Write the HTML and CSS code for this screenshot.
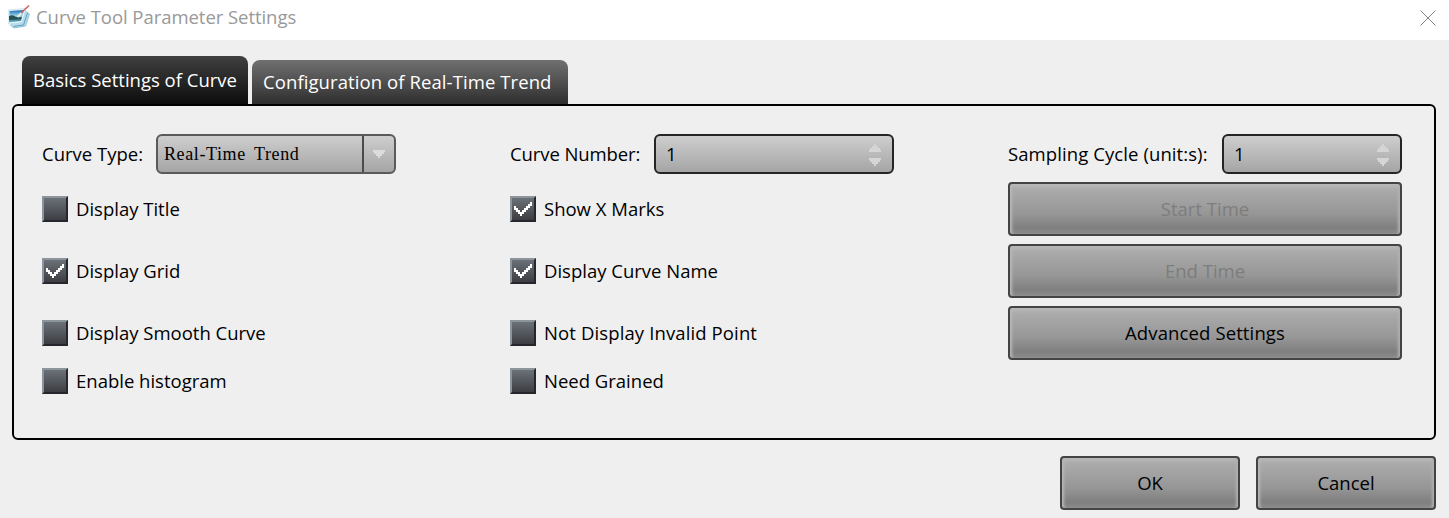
FILE: index.html
```
<!DOCTYPE html>
<html lang="en">
<head>
<meta charset="utf-8">
<title>Curve Tool Parameter Settings</title>
<link rel="stylesheet" href="styles.css">
</head>
<body>
<svg class="defs" width="0" height="0" aria-hidden="true">
  <symbol id="check" viewBox="0 0 26 26"><path d="M4 10h2v2h2v2h2v2h2v-2h2v-2h2v-2h2v-2h2v-2h2v4h-2v2h-2v2h-2v2h-2v2h-2v2h-2v-2h-2v-2h-2v-2h-2z" fill="#fff"/></symbol>
  <symbol id="down" viewBox="0 0 12 8"><path d="M0 0h12v2h-1v2h-2v2h-2v2h-2v-2h-2v-2h-2v-2h-1z" fill="#dcdcdc"/></symbol>
  <symbol id="spin" viewBox="0 0 12 22"><path d="M5 0h2v2h2v2h2v2h1v2h-12v-2h1v-2h2v-2h2zM0 14h12v2h-1v2h-2v2h-2v2h-2v-2h-2v-2h-2v-2h-1z" fill="#d5d5d5"/></symbol>
</svg>
<header class="titlebar">
  <svg class="app-icon" width="24" height="25" viewBox="0 0 24 25">
    <defs><linearGradient id="sky" x1="0" y1="0" x2="0" y2="1"><stop offset="0" stop-color="#1769b5"/><stop offset=".5" stop-color="#a6ddec"/><stop offset=".62" stop-color="#23556c"/><stop offset="1" stop-color="#71bdd5"/></linearGradient></defs>
    <path d="M17 7l4.500 3-4 12-12 2-3-3z" fill="#b4dcea" stroke="#8fc4da"/>
    <path d="M19.500 9l-4 12-10 1.500" fill="none" stroke="#5c9fc0"/>
    <path d="M0 6l18-1.500-4 14-14 1.500z" fill="#eef8fc" stroke="#b5d7e4" stroke-width=".6"/>
    <path d="M1.500 7l14.500-1-3 11-12 1.500z" fill="url(#sky)"/>
    <path d="M1 12q4-2 7 1l5 1v1l-12 1z" fill="#28524d"/>
    <path d="M9.500 13l4.500-4.500" stroke="#ededdf" stroke-width="2.200"/><path d="M13 9l8-7.500" stroke="#cc6761" stroke-width="1.600"/>
  </svg>
  <span class="window-title">Curve Tool Parameter Settings</span>
  <svg class="close" width="16" height="16" viewBox="0 0 16 16"><path d="M.5.5l15 15M15.500 .5l-15 15" stroke="#858585" fill="none"/></svg>
</header>
<nav class="tabs">
  <div class="tab active">Basics Settings of Curve</div>
  <div class="tab">Configuration of Real-Time Trend</div>
</nav>
<main class="panel">
  <div class="col">
    <div class="field"><span class="label">Curve Type:</span>
      <div class="combo"><span class="combo-value">Real-Time Trend</span><span class="combo-arrow"><svg width="12" height="8"><use href="#down"/></svg></span></div></div>
    <div class="option"><i class="box"></i><span>Display Title</span></div>
    <div class="option"><i class="box"><svg width="26" height="26"><use href="#check"/></svg></i><span>Display Grid</span></div>
    <div class="option"><i class="box"></i><span>Display Smooth Curve</span></div>
    <div class="option"><i class="box"></i><span>Enable histogram</span></div>
  </div>
  <div class="col">
    <div class="field"><span class="label">Curve Number:</span>
      <div class="spinbox"><span>1</span><svg width="12" height="22"><use href="#spin"/></svg></div></div>
    <div class="option"><i class="box"><svg width="26" height="26"><use href="#check"/></svg></i><span>Show X Marks</span></div>
    <div class="option"><i class="box"><svg width="26" height="26"><use href="#check"/></svg></i><span>Display Curve Name</span></div>
    <div class="option"><i class="box"></i><span class="wide">Not Display Invalid Point</span></div>
    <div class="option"><i class="box"></i><span>Need Grained</span></div>
  </div>
  <div class="col">
    <div class="field"><span class="label">Sampling Cycle (unit:s):</span>
      <div class="spinbox short"><span>1</span><svg width="12" height="22"><use href="#spin"/></svg></div></div>
    <button class="btn disabled">Start Time</button>
    <button class="btn disabled">End Time</button>
    <button class="btn wide">Advanced Settings</button>
  </div>
</main>
<footer class="actions"><button class="btn">OK</button><button class="btn">Cancel</button></footer>
</body>
</html>
```

FILE: styles.css
```
* { box-sizing: border-box; }
body {
  margin: 0;
  width: 1449px;
  height: 518px;
  overflow: hidden;
  background: #efefef;
  color: #000;
  font: 18.500px/26px "Open Sans", "Noto Sans", sans-serif;
  white-space: nowrap;
}
svg { display: block; flex: none; }
.defs { position: absolute; }
.titlebar {
  display: flex;
  align-items: flex-start;
  height: 40px;
  padding: 4px 13px 0 8px;
  background: #fff;
  color: #999;
}
.window-title { margin-left: 4px; letter-spacing: -0.05px; }
.close { margin: 6px 0 0 auto; }
.tabs {
  display: flex;
  align-items: flex-end;
  gap: 4px;
  height: 64px;
  padding-left: 22px;
}
.tab {
  width: 316px;
  height: 44px;
  padding: 9px 0 0 11px;
  border-radius: 8px 8px 0 0;
  background: linear-gradient(#707070, #2e2e2e);
  color: #fff;
  letter-spacing: 0.09px;
}
.tab.active {
  width: 226px;
  height: 48px;
  padding-top: 11px;
  background: linear-gradient(#404040, #0d0d0d);
  letter-spacing: 0;
}
.panel {
  display: grid;
  grid-template-columns: 468px 498px 394px;
  width: 1424px;
  height: 336px;
  margin-left: 12px;
  padding: 28px;
  border: 2px solid #000;
  border-radius: 6px;
}
.col {
  display: grid;
  grid-template-rows: 40px 54px 54px 54px 26px;
  gap: 8px;
  align-content: start;
}
.field { display: flex; align-items: center; }
.col:nth-child(1) .label { width: 114px; }
.col:nth-child(2) .label { width: 144px; letter-spacing: -0.1px; }
.col:nth-child(3) .label { width: 214px; letter-spacing: 0.09px; }
.combo, .spinbox {
  display: flex;
  align-items: center;
  width: 240px;
  height: 40px;
  border: 2px solid #5a5a5a;
  border-radius: 6px;
  background: linear-gradient(#cecece, #a5a5a5);
}
.combo-value {
  flex: 1;
  padding-left: 6px;
  font: 18px/26px "Liberation Serif", serif;
  letter-spacing: 0.6px;
  word-spacing: 3.5px;
}
.combo-arrow {
  display: flex;
  align-items: center;
  justify-content: center;
  width: 32px;
  height: 36px;
  border-left: 2px solid #484c50;
}
.spinbox {
  justify-content: space-between;
  padding: 0 11px 0 10px;
  border-color: #252525;
}
.spinbox svg { margin-top: 2px; }
.spinbox.short { width: 180px; }
.option { display: flex; align-items: center; gap: 8px; }
.wide { letter-spacing: 0.12px; }
.box {
  width: 26px;
  height: 26px;
  border: 2px solid;
  border-color: #8c949c #26262c #26262c #8c949c;
  background: linear-gradient(#6b7179, #3c3d42);
}
.box svg { margin: -2px; }
.btn {
  width: 100%;
  height: 54px;
  padding: 0;
  border: 2px solid #444;
  border-radius: 4px;
  background: linear-gradient(#b9b9b9, #aaa 12%, #969696 60%, #7f7f7f 88%, #8b8b8b);
  box-shadow: inset 4px 0 3px -2px #b8b8b8, inset -4px 0 3px -2px #b0b0b0;
  font: inherit;
  color: #000;
}
.btn.disabled { color: #7d7d7d; }
.actions {
  display: flex;
  justify-content: flex-end;
  gap: 16px;
  padding: 16px 13px 0 0;
}
.actions .btn { width: 180px; }
```
